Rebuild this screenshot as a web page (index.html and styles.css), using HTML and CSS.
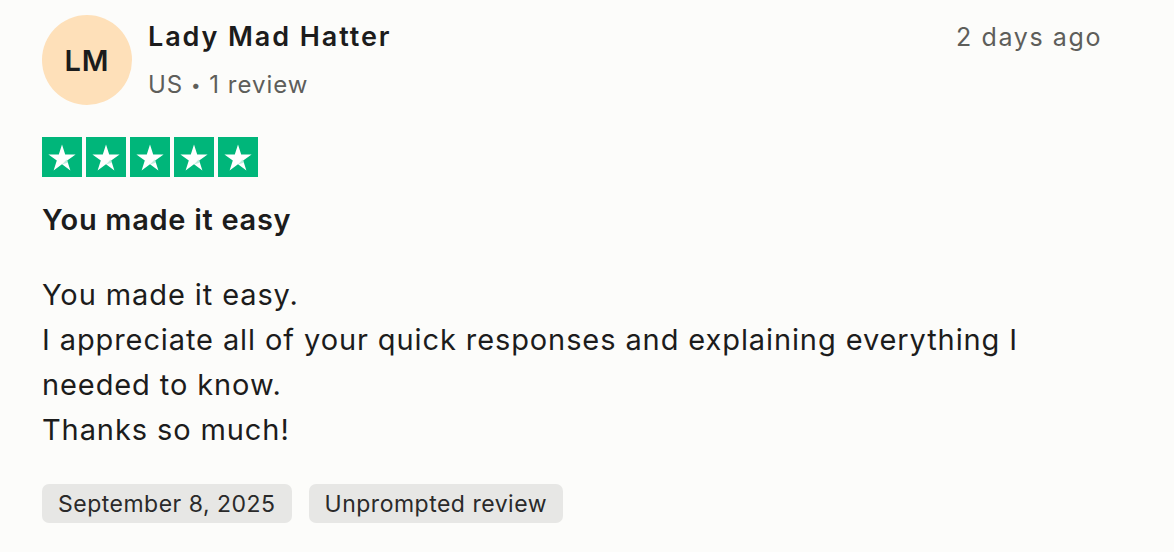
FILE: index.html
```html
<!DOCTYPE html>
<html lang="en">
<head>
<meta charset="utf-8">
<title>Review</title>
<link rel="stylesheet" href="styles.css">
</head>
<body>
<article class="review">
  <header class="review-header">
    <div class="avatar">LM</div>
    <div class="consumer">
      <div class="consumer-name">Lady Mad Hatter</div>
      <div class="consumer-meta">US <span class="dot">•</span> 1 review</div>
    </div>
    <time class="ago">2 days ago</time>
  </header>
  <div class="stars" aria-label="Rated 5 out of 5 stars">
    <span class="star"><svg viewBox="0 0 40 40"><path d="M20 7.5l3.2 9.9h10.4l-8.4 6.1 3.2 9.9-8.4-6.1-8.4 6.1 3.2-9.9-8.4-6.1h10.4z" fill="#fff"/><path d="M24.6 22.6l1 3.1-5.6 1.7z" fill="#00b67a" opacity=".25"/></svg></span>
    <span class="star"><svg viewBox="0 0 40 40"><path d="M20 7.5l3.2 9.9h10.4l-8.4 6.1 3.2 9.9-8.4-6.1-8.4 6.1 3.2-9.9-8.4-6.1h10.4z" fill="#fff"/><path d="M24.6 22.6l1 3.1-5.6 1.7z" fill="#00b67a" opacity=".25"/></svg></span>
    <span class="star"><svg viewBox="0 0 40 40"><path d="M20 7.5l3.2 9.9h10.4l-8.4 6.1 3.2 9.9-8.4-6.1-8.4 6.1 3.2-9.9-8.4-6.1h10.4z" fill="#fff"/><path d="M24.6 22.6l1 3.1-5.6 1.7z" fill="#00b67a" opacity=".25"/></svg></span>
    <span class="star"><svg viewBox="0 0 40 40"><path d="M20 7.5l3.2 9.9h10.4l-8.4 6.1 3.2 9.9-8.4-6.1-8.4 6.1 3.2-9.9-8.4-6.1h10.4z" fill="#fff"/><path d="M24.6 22.6l1 3.1-5.6 1.7z" fill="#00b67a" opacity=".25"/></svg></span>
    <span class="star"><svg viewBox="0 0 40 40"><path d="M20 7.5l3.2 9.9h10.4l-8.4 6.1 3.2 9.9-8.4-6.1-8.4 6.1 3.2-9.9-8.4-6.1h10.4z" fill="#fff"/><path d="M24.6 22.6l1 3.1-5.6 1.7z" fill="#00b67a" opacity=".25"/></svg></span>
  </div>
  <h2 class="title">You made it easy</h2>
  <p class="text">You made it easy.<br>I appreciate all of your quick responses and explaining everything I needed to know.<br>Thanks so much!</p>
  <div class="tags">
    <span class="tag">September 8, 2025</span>
    <span class="tag">Unprompted review</span>
  </div>
</article>
</body>
</html>
```

FILE: styles.css
```css
* { box-sizing: border-box; }
html, body { margin: 0; padding: 0; }
body {
  background: #fcfcfa;
  font-family: Inter, "Noto Sans", "Liberation Sans", sans-serif;
  color: #1c1c1c;
}
.review {
  width: 1174px;
  height: 552px;
  padding: 15px 72px 0 42px;
}
.review-header {
  display: flex;
  align-items: flex-start;
}
.avatar {
  width: 90px;
  height: 90px;
  border-radius: 50%;
  background: #fee0b9;
  display: flex;
  align-items: center;
  justify-content: center;
  font-size: 29px;
  font-weight: 600;
  letter-spacing: 1px;
  color: #1c1c1c;
  flex: none;
}
.consumer {
  margin-left: 16px;
  padding-top: 6px;
  flex: 1;
}
.consumer-name {
  font-size: 27px;
  font-weight: 600;
  line-height: 32px;
  letter-spacing: 1.9px;
}
.consumer-meta {
  margin-top: 17px;
  font-size: 24px;
  line-height: 30px;
  letter-spacing: 1px;
  color: #5e5e5a;
}
.dot { font-size: 17px; position: relative; top: -2px; }
.ago {
  font-size: 25px;
  color: #5e5e5a;
  line-height: 32px;
  letter-spacing: 1.6px;
  padding-top: 6px;
}
.stars {
  display: flex;
  gap: 4px;
  margin-top: 32px;
}
.star {
  width: 40px;
  height: 40px;
  background: #00b67a;
  display: block;
}
.star svg { width: 40px; height: 40px; display: block; }
.title {
  margin: 25px 0 0;
  font-size: 29px;
  font-weight: 600;
  line-height: 36px;
  letter-spacing: 0.7px;
}
.text {
  margin: 34px 0 0;
  font-size: 29px;
  line-height: 45px;
  letter-spacing: 0.9px;
  max-width: 1040px;
}
.tags {
  display: flex;
  gap: 17px;
  margin-top: 32px;
}
.tag {
  background: #e7e7e5;
  border-radius: 7px;
  padding: 0 16px;
  height: 39px;
  display: flex;
  align-items: center;
  font-size: 23px;
  letter-spacing: 0.5px;
  color: #2a2a2a;
}
```
